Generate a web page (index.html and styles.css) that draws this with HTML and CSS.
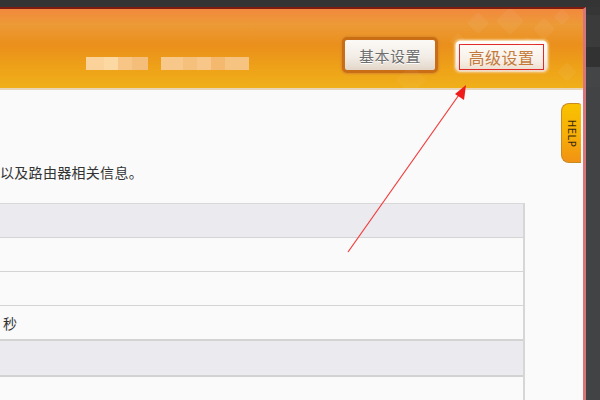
FILE: index.html
```html
<!DOCTYPE html>
<html>
<head>
<meta charset="utf-8">
<link rel="stylesheet" href="styles.css">
</head>
<body>
<div class="topbar"></div>
<div class="shell">
  <div class="page">
    <div class="header">
      <div class="deco">
        <span class="d d1"></span><span class="d d2"></span><span class="d d3"></span>
        <span class="d d4"></span><span class="d d5"></span><span class="d d6"></span>
        <span class="d d7"></span><span class="d d8"></span>
      </div>
      <div class="blur">
        <div class="bgroup">
          <span class="b b1"></span><span class="b b2"></span><span class="b b3"></span><span class="b b4"></span>
        </div>
        <div class="bgroup">
          <span class="b b5"></span><span class="b b6"></span><span class="b b7"></span><span class="b b8"></span><span class="b b9"></span>
        </div>
      </div>
      <div class="tabs">
        <div class="tab basic"><span>基本设置</span></div>
        <div class="tab adv"><span class="mark">高级设置</span></div>
      </div>
    </div>
    <div class="content">
      <p class="desc">以及路由器相关信息。</p>
      <div class="table">
        <div class="row gray"></div>
        <div class="row"></div>
        <div class="row"></div>
        <div class="row"><span class="cell">秒</span></div>
        <div class="row gray thick"></div>
        <div class="row last"></div>
      </div>
    </div>
    <div class="help"><span>HELP</span></div>
    <svg class="arrow" width="583" height="391" viewBox="0 0 583 391">
      <line x1="348" y1="243" x2="461" y2="83" stroke="#f23a3a" stroke-width="1.2"/>
      <polygon points="466,76 464,91 455,85" fill="#f01c1c"/>
    </svg>
  </div>
  <div class="side">
    <div class="band b-a"></div>
    <div class="band b-b"></div>
    <div class="band b-c"></div>
    <div class="band b-d"></div>
  </div>
</div>
</body>
</html>
```
FILE: styles.css
```css
html, body {
  margin: 0;
  padding: 0;
  width: 600px;
  height: 400px;
  overflow: hidden;
  background: #3e3f40;
  font-family: "Noto Sans CJK SC", "Noto Sans", sans-serif;
}
.topbar {
  height: 7px;
  background: #343434;
}
.shell {
  display: flex;
  height: 393px;
}
.page {
  position: relative;
  width: 583px;
  flex: none;
  border-top: 2px solid #7e1c12;
  border-right: 3px solid #d6767a;
  background: #fafafa;
  overflow: hidden;
}
.side {
  flex: 1;
  display: flex;
  flex-direction: column;
  background: #424344;
}
.band.b-a { height: 8px; background: #363636; }
.band.b-b { height: 32px; background: #3b3b3b; }
.band.b-c { height: 20px; background: #323232; }
.band.b-d { height: 20px; background: #444546; }

.header {
  position: relative;
  height: 79px;
  border-bottom: 2px solid #e9d6b8;
  background: linear-gradient(to bottom, #f2893e 0%, #ec9a36 20%, #ea8f1c 45%, #eea218 75%, #f0b01a 100%);
  display: flex;
  align-items: flex-start;
  padding-left: 86px;
  box-sizing: content-box;
}
.deco {
  position: absolute;
  left: 0; top: 0; right: 0; bottom: 0;
  pointer-events: none;
}
.d {
  position: absolute;
  width: 16px;
  height: 16px;
  border-radius: 3px;
  background: rgba(255, 255, 255, 0.05);
  transform: rotate(45deg);
}
.d1 { left: 470px; top: 6px; }
.d2 { left: 500px; top: 2px; width: 20px; height: 20px; }
.d3 { left: 536px; top: 12px; }
.d4 { left: 452px; top: 26px; width: 12px; height: 12px; }
.d5 { left: 520px; top: 30px; width: 14px; height: 14px; }
.d6 { left: 556px; top: 2px; width: 12px; height: 12px; }
.d7 { left: 400px; top: 60px; width: 22px; height: 22px; background: rgba(255,255,255,0.04); }
.d8 { left: 560px; top: 56px; width: 14px; height: 14px; }

.blur {
  display: flex;
  gap: 13px;
  margin-top: 48px;
}
.bgroup {
  display: flex;
  height: 13px;
}
.b { display: block; height: 13px; }
.b1 { width: 18px; background: #fbd39a; }
.b2 { width: 14px; background: #fcd8a2; }
.b3 { width: 14px; background: #f7c586; }
.b4 { width: 16px; background: #f5bd7a; }
.b5 { width: 22px; background: #f8c88a; }
.b6 { width: 14px; background: #f5bf7c; }
.b7 { width: 14px; background: #f8c688; }
.b8 { width: 14px; background: #f4b96e; }
.b9 { width: 24px; background: #f6c380; }

.tabs {
  display: flex;
  align-items: flex-start;
  gap: 17px;
  margin-left: auto;
  margin-right: 35px;
  margin-top: 28px;
}
.tab {
  box-sizing: border-box;
  display: flex;
  align-items: center;
  justify-content: center;
  border-radius: 5px;
}
.tab.basic {
  width: 96px;
  height: 36px;
  background: linear-gradient(to bottom, #fcfaf7 0%, #f1ebe4 60%, #e3d6c8 100%);
  border: 3px solid #c96e14;
  box-shadow: 0 0 2px 1px #d98a2c;
  color: #6e6e6e;
  font-size: 15px;
  letter-spacing: 0.5px;
  text-shadow: 0 1px 0 #ffffff;
}
.tab.adv {
  width: 93px;
  height: 32px;
  margin-top: 3px;
  background: linear-gradient(to bottom, #fffdfa 0%, #f7f0e8 65%, #ecdccb 100%);
  border: 1px solid #f6d8a8;
  box-shadow: 0 0 2px 1px #f4c47a;
  align-items: flex-end;
  padding-bottom: 1px;
}
.mark {
  display: flex;
  align-items: center;
  justify-content: center;
  width: 85px;
  height: 26px;
  box-sizing: border-box;
  border: 1px solid #e02a2a;
  color: #c47a3c;
  font-size: 16px;
  letter-spacing: 0.5px;
}

.content {
  padding-top: 72px;
}
.desc {
  margin: 0 0 21px 0;
  font-size: 14px;
  line-height: 20px;
  height: 20px;
  color: #333333;
  letter-spacing: 0.3px;
  white-space: nowrap;
}
.table {
  width: 525px;
  border-top: 1px solid #d8d8d8;
  border-right: 2px solid #d6d6d6;
  box-sizing: border-box;
}
.row {
  height: 33px;
  border-bottom: 1px solid #d4d4d4;
  display: flex;
  align-items: center;
  background: #fafafa;
}
.row.gray {
  background: #eaeaef;
}
.row.thick {
  height: 34px;
  border-top: 1px solid #d2d2d2;
  border-bottom: 2px solid #d2d2d2;
}
.row.last {
  height: 40px;
  border-bottom: none;
}
.cell {
  margin-left: 3px;
  font-size: 14px;
  color: #333;
}

.help {
  position: absolute;
  left: 561px;
  top: 94px;
  width: 20px;
  height: 60px;
  box-sizing: border-box;
  border: 1px solid #c98a22;
  border-right: none;
  border-radius: 8px 3px 0 8px;
  background: linear-gradient(to bottom, #f9c200 0%, #f6ae08 55%, #f19214 100%);
  display: flex;
  align-items: center;
  justify-content: center;
}
.help span {
  display: block;
  transform: rotate(90deg);
  font-family: "DejaVu Sans", sans-serif;
  font-size: 10px;
  color: #3a2a10;
  letter-spacing: 0.5px;
  white-space: nowrap;
}
.arrow {
  position: absolute;
  left: 0;
  top: 0;
  pointer-events: none;
}
```
